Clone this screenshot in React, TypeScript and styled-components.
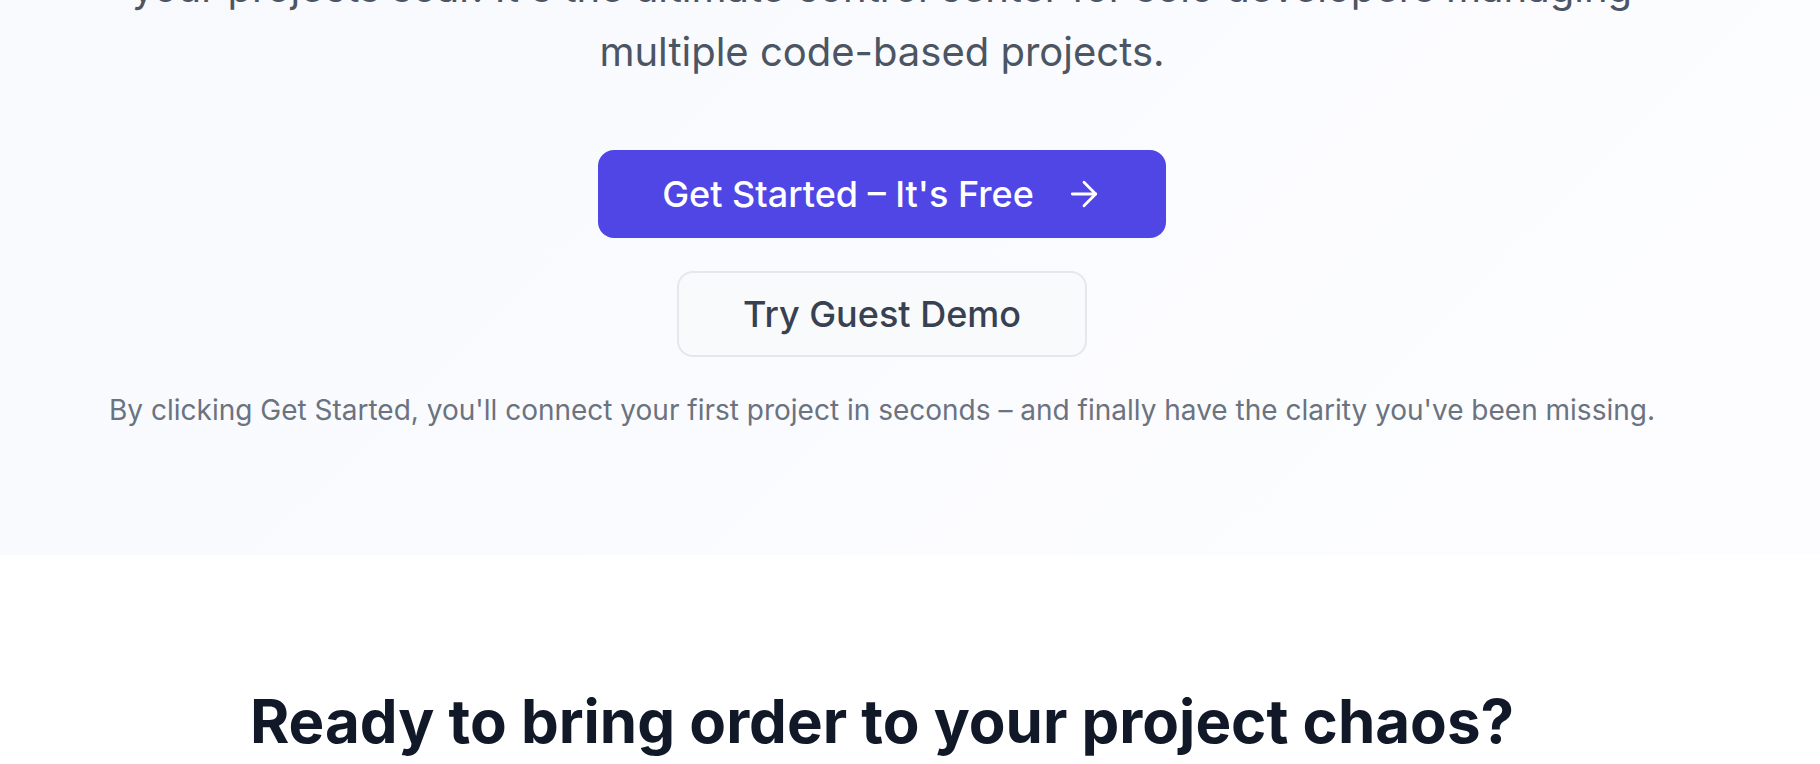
import React from "react";
import styled, { createGlobalStyle } from "styled-components";
import { ArrowRight } from "lucide-react";

const GlobalStyle = createGlobalStyle`
  html, body {
    margin: 0;
    padding: 0;
    background: #ffffff;
    font-family: Inter, "Noto Sans", "Liberation Sans", sans-serif;
    -webkit-font-smoothing: antialiased;
  }
  * { box-sizing: border-box; }
`;

const Page = styled.div`
  width: 100%;
  overflow: hidden;
  height: 764px;
`;

const Hero = styled.section`
  margin-top: -44px;
  padding: 0 56px 125px 0;
  background: linear-gradient(135deg, #f7f9fc 0%, #fafbfe 45%, #fdfdff 100%);
`;

const HeroInner = styled.div`
  max-width: 1536px;
  margin: 0 auto;
  display: flex;
  flex-direction: column;
  align-items: center;
  text-align: center;
`;

const Lead = styled.p`
  margin: 0 0 66px;
  font-size: 40px;
  line-height: 64px;
  font-weight: 400;
  color: #4b5563;
  white-space: nowrap;
`;

const Actions = styled.div`
  display: flex;
  flex-direction: column;
  align-items: center;
  gap: 33px;
`;

const PrimaryButton = styled.button`
  display: inline-flex;
  align-items: center;
  gap: 30px;
  height: 88px;
  padding: 0 62px 0 64px;
  border: none;
  border-radius: 16px;
  background: #4f46e5;
  color: #ffffff;
  font-family: inherit;
  font-size: 36px;
  line-height: 56px;
  font-weight: 500;
  cursor: pointer;
`;

const SecondaryButton = styled.button`
  display: inline-flex;
  align-items: center;
  justify-content: center;
  height: 86px;
  padding: 0 64px;
  border: 2px solid #e5e7eb;
  border-radius: 16px;
  background: #f9fafb;
  color: #374151;
  font-family: inherit;
  font-size: 36px;
  line-height: 56px;
  font-weight: 500;
  cursor: pointer;
`;

const Note = styled.p`
  margin: 33px 0 0;
  font-size: 28px;
  line-height: 40px;
  color: #6b7280;
  white-space: nowrap;
`;

const CtaSection = styled.section`
  padding: 130px 56px 0 0;
  background: #ffffff;
  text-align: center;
`;

const CtaTitle = styled.h2`
  margin: 0;
  font-size: 60px;
  line-height: 72px;
  font-weight: 700;
  color: #111827;
  white-space: nowrap;
`;

export default function App() {
  return (
    <>
      <GlobalStyle />
      <Page>
        <Hero>
          <HeroInner>
            <Lead>
              your projects soar. It's the ultimate control center for solo developers managing
              <br />
              multiple code-based projects.
            </Lead>
            <Actions>
              <PrimaryButton>
                Get Started – It's Free
                <ArrowRight size={40} strokeWidth={1.7} />
              </PrimaryButton>
              <SecondaryButton>Try Guest Demo</SecondaryButton>
            </Actions>
            <Note>
              By clicking Get Started, you'll connect your first project in seconds – and finally have the
              clarity you've been missing.
            </Note>
          </HeroInner>
        </Hero>
        <CtaSection>
          <CtaTitle>Ready to bring order to your project chaos?</CtaTitle>
        </CtaSection>
      </Page>
    </>
  );
}
